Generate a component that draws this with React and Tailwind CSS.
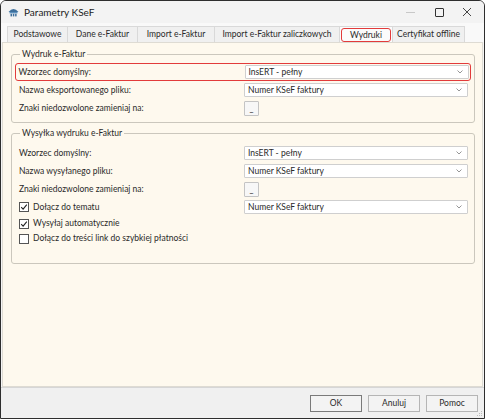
import React from 'react'

const FONT = "font-['Lato','Liberation_Sans',sans-serif]"

const TABS = [
  { label: 'Podstawowe', w: 'w-[61px]' },
  { label: 'Dane e-Faktur', w: 'w-[71px]' },
  { label: 'Import e-Faktur', w: 'w-[78px]' },
  { label: 'Import e-Faktur zaliczkowych', w: 'w-[126px]' },
  { label: 'Wydruki', w: 'w-[54px]', active: true },
  { label: 'Certyfikat offline', w: 'w-[73px]' },
]

function Chevron() {
  return (
    <svg width="6" height="4" viewBox="0 0 6 4" className="shrink-0">
      <path d="M0.5 0.5 L3 3 L5.5 0.5" fill="none" stroke="#8a8a8a" strokeWidth="0.9" />
    </svg>
  )
}

function Select({ value }) {
  return (
    <div className="flex h-[14px] w-[224px] items-center justify-between rounded-[1px] border border-[#cfcfcf] bg-white pl-[3px] pr-[5px] text-[#2a2a2a]">
      <span className="leading-none">{value}</span>
      <Chevron />
    </div>
  )
}

function SmallButton() {
  return (
    <div className="flex h-[15px] w-[15px] items-end justify-center rounded-[1px] border border-[#c4c4c4] bg-[#f7f7f7] pb-[2px] leading-none text-[#2a2a2a]">
      _
    </div>
  )
}

function Row({ label, children, highlight }) {
  return (
    <div
      className={`flex h-[18px] items-center justify-between ${
        highlight ? '-mx-[3px] rounded-[3px] border-[1.5px] border-[#e23b3b] px-[1.5px]' : ''
      }`}
    >
      <span className="pl-[1px] text-[#2a2a2a]">{label}</span>
      <div className="flex w-[224px] justify-start">{children}</div>
    </div>
  )
}

function Check({ checked, label }) {
  return (
    <div className="flex h-[15px] items-center gap-[4px] pl-[1px]">
      <div className="flex h-[10px] w-[10px] items-center justify-center border border-[#555] bg-white">
        {checked && (
          <svg width="8" height="8" viewBox="0 0 8 8">
            <path d="M1.2 4.2 L3.1 6.1 L6.8 1.6" fill="none" stroke="#222" strokeWidth="1.1" />
          </svg>
        )}
      </div>
      <span className="text-[#2a2a2a]">{label}</span>
    </div>
  )
}

function Group({ title, children, className = '' }) {
  return (
    <fieldset className={`rounded-[3px] border border-[#cbc7bd] px-[6px] ${className}`}>
      <legend className="ml-[2px] px-[2px] leading-[12px] text-[#2a2a2a]">{title}</legend>
      {children}
    </fieldset>
  )
}

export default function App() {
  return (
    <div
      className={`${FONT} flex h-[419px] w-[485px] flex-col overflow-hidden rounded-t-[6px] border border-[#2e2e2e] bg-[#f5f5f5] text-[8.5px]`}
    >
      {/* title bar */}
      <div className="flex h-[22px] shrink-0 items-center bg-[#f3f3f3]">
        <svg width="11" height="10" viewBox="0 0 11 10" className="ml-[7px]">
          <path d="M0.5 5 Q5.5 -1 10.5 5 Z" fill="#3d6f9c" />
          <rect x="1.5" y="5" width="8" height="1.4" fill="#5a8fbd" />
          <rect x="2.5" y="6.8" width="1.5" height="2.6" fill="#3d6f9c" />
          <rect x="4.8" y="6.8" width="1.5" height="2.6" fill="#3d6f9c" />
          <rect x="7.1" y="6.8" width="1.5" height="2.6" fill="#3d6f9c" />
        </svg>
        <span className="ml-[5px] text-[10px] text-[#1b1b1b]">Parametry KSeF</span>
        <div className="ml-auto flex items-center">
          <div className="flex w-[29px] justify-center">
            <div className="h-px w-[9px] bg-[#c8c8c8]" />
          </div>
          <div className="flex w-[29px] justify-center">
            <div className="h-[9px] w-[9px] rounded-[1px] border border-[#333]" />
          </div>
          <div className="flex w-[30px] justify-center pr-[4px]">
            <svg width="10" height="10" viewBox="0 0 10 10">
              <path d="M1 1 L9 9 M9 1 L1 9" stroke="#333" strokeWidth="0.9" />
            </svg>
          </div>
        </div>
      </div>

      {/* tabs */}
      <div className="flex h-[19px] shrink-0 items-end bg-[#f9f9f9] pl-[6px]">
        {TABS.map((t) => (
          <div
            key={t.label}
            className={`${t.w} -mr-px flex h-[16px] items-center justify-center border border-b-0 border-[#d9d9d9] ${
              t.active ? 'bg-[#fbfbfb] px-[1px] pt-[1px]' : 'bg-[#f0f0f0]'
            }`}
          >
            {t.active ? (
              <div className="flex h-[14px] w-full items-center justify-center rounded-[3px] border-[1.5px] border-[#e23b3b] text-[#2a2a2a]">
                {t.label}
              </div>
            ) : (
              <span className="whitespace-nowrap text-[#2a2a2a]">{t.label}</span>
            )}
          </div>
        ))}
      </div>

      {/* content */}
      <div className="mx-px flex flex-1 flex-col border border-[#dedbd3] bg-[#fef9ee] pl-[8px] pr-[7px] pt-[5px]">
        <Group title="Wydruk e-Faktur" className="pb-[5px]">
          <div className="pt-[3px]">
            <Row label="Wzorzec domyślny:" highlight>
              <Select value="InsERT - pełny" />
            </Row>
            <Row label="Nazwa eksportowanego pliku:">
              <Select value="Numer KSeF faktury" />
            </Row>
            <Row label="Znaki niedozwolone zamieniaj na:">
              <SmallButton />
            </Row>
          </div>
        </Group>

        <Group title="Wysyłka wydruku e-Faktur" className="mt-[4px] pb-[17px]">
          <div className="pt-[5px]">
            <Row label="Wzorzec domyślny:">
              <Select value="InsERT - pełny" />
            </Row>
            <Row label="Nazwa wysyłanego pliku:">
              <Select value="Numer KSeF faktury" />
            </Row>
            <Row label="Znaki niedozwolone zamieniaj na:">
              <SmallButton />
            </Row>
            <div className="flex h-[18px] items-center justify-between">
              <Check checked label="Dołącz do tematu" />
              <div className="flex w-[224px]">
                <Select value="Numer KSeF faktury" />
              </div>
            </div>
            <Check checked label="Wysyłaj automatycznie" />
            <Check label="Dołącz do treści link do szybkiej płatności" />
          </div>
        </Group>
      </div>

      {/* bottom bar */}
      <div className="relative flex h-[31px] shrink-0 items-center justify-end gap-[6px] border-t border-[#d6d6d6] bg-[#f0f0f0] pr-[6px]">
        <button className="h-[17px] w-[52px] border-[1.5px] border-[#7a7a7a] bg-[#f3f3f3] text-[8.5px] text-[#2a2a2a]">
          OK
        </button>
        <button className="h-[17px] w-[52px] border border-[#b5b5b5] bg-[#f3f3f3] text-[8.5px] text-[#2a2a2a]">
          Anuluj
        </button>
        <button className="h-[17px] w-[52px] border border-[#b5b5b5] bg-[#f3f3f3] text-[8.5px] text-[#2a2a2a]">
          Pomoc
        </button>
        <svg width="6" height="6" viewBox="0 0 6 6" className="absolute bottom-[1px] right-[1px]">
          <rect x="4" y="0" width="1" height="1" fill="#bbb" />
          <rect x="2" y="2" width="1" height="1" fill="#bbb" />
          <rect x="4" y="2" width="1" height="1" fill="#bbb" />
          <rect x="0" y="4" width="1" height="1" fill="#bbb" />
          <rect x="2" y="4" width="1" height="1" fill="#bbb" />
          <rect x="4" y="4" width="1" height="1" fill="#bbb" />
        </svg>
      </div>
    </div>
  )
}
